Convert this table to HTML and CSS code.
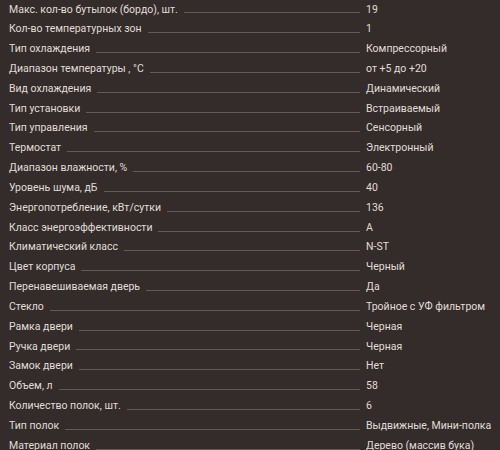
FILE: index.html
```html
<!DOCTYPE html>
<html lang="ru">
<head>
<meta charset="utf-8">
<link rel="stylesheet" href="styles.css">
</head>
<body>
<div class="specs">
  <div class="row"><div class="name"><span>Макс. кол-во бутылок (бордо), шт.</span><i class="line"></i></div><div class="val">19</div></div>
  <div class="row"><div class="name"><span>Кол-во температурных зон</span><i class="line"></i></div><div class="val">1</div></div>
  <div class="row"><div class="name"><span>Тип охлаждения</span><i class="line"></i></div><div class="val">Компрессорный</div></div>
  <div class="row"><div class="name"><span>Диапазон температуры , °C</span><i class="line"></i></div><div class="val">от +5 до +20</div></div>
  <div class="row"><div class="name"><span>Вид охлаждения</span><i class="line"></i></div><div class="val">Динамический</div></div>
  <div class="row"><div class="name"><span>Тип установки</span><i class="line"></i></div><div class="val">Встраиваемый</div></div>
  <div class="row"><div class="name"><span>Тип управления</span><i class="line"></i></div><div class="val">Сенсорный</div></div>
  <div class="row"><div class="name"><span>Термостат</span><i class="line"></i></div><div class="val">Электронный</div></div>
  <div class="row"><div class="name"><span>Диапазон влажности, %</span><i class="line"></i></div><div class="val">60-80</div></div>
  <div class="row"><div class="name"><span>Уровень шума, дБ</span><i class="line"></i></div><div class="val">40</div></div>
  <div class="row"><div class="name"><span>Энергопотребление, кВт/сутки</span><i class="line"></i></div><div class="val">136</div></div>
  <div class="row"><div class="name"><span>Класс энергоэффективности</span><i class="line"></i></div><div class="val">A</div></div>
  <div class="row"><div class="name"><span>Климатический класс</span><i class="line"></i></div><div class="val">N-ST</div></div>
  <div class="row"><div class="name"><span>Цвет корпуса</span><i class="line"></i></div><div class="val">Черный</div></div>
  <div class="row"><div class="name"><span>Перенавешиваемая дверь</span><i class="line"></i></div><div class="val">Да</div></div>
  <div class="row"><div class="name"><span>Стекло</span><i class="line"></i></div><div class="val">Тройное с УФ фильтром</div></div>
  <div class="row"><div class="name"><span>Рамка двери</span><i class="line"></i></div><div class="val">Черная</div></div>
  <div class="row"><div class="name"><span>Ручка двери</span><i class="line"></i></div><div class="val">Черная</div></div>
  <div class="row"><div class="name"><span>Замок двери</span><i class="line"></i></div><div class="val">Нет</div></div>
  <div class="row"><div class="name"><span>Объем, л</span><i class="line"></i></div><div class="val">58</div></div>
  <div class="row"><div class="name"><span>Количество полок, шт.</span><i class="line"></i></div><div class="val">6</div></div>
  <div class="row"><div class="name"><span>Тип полок</span><i class="line"></i></div><div class="val">Выдвижные, Мини-полка</div></div>
  <div class="row"><div class="name"><span>Материал полок</span><i class="line"></i></div><div class="val">Дерево (массив бука)</div></div>
</div>
</body>
</html>
```
FILE: styles.css
```css
html, body {
  margin: 0;
  padding: 0;
  background: #342c2a;
}
body {
  font-family: Roboto, "Liberation Sans", sans-serif;
  font-size: 10.5px;
  color: #e0dcd8;
  overflow: hidden;
  height: 450px;
}
.specs {
  margin-top: -0.5px;
  padding-left: 9px;
}
.row {
  display: flex;
  height: 19.84px;
  line-height: 19.84px;
  white-space: nowrap;
}
.name {
  width: 351px;
  flex: none;
  display: flex;
  align-items: center;
}
.line {
  flex: 1;
  height: 1px;
  background: #635a57;
  margin: 7px 0 0 6px;
}
.val {
  margin-left: 6px;
}
```
